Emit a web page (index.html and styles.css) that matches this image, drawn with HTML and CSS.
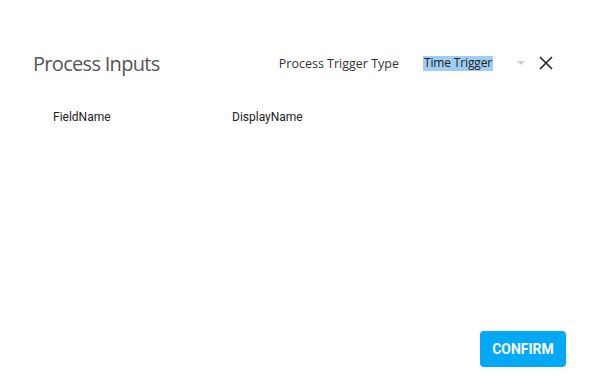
FILE: index.html
```html
<!DOCTYPE html>
<html>
	<head>
		<meta charset="UTF-8">
		<title>Process Inputs</title>
		<link rel="stylesheet" href="styles.css">
	</head>
	<body>
		<div class="dialog">
			<div class="dialog-head">
				<h2 class="title">Process Inputs</h2>
				<div class="trigger">
					<span class="trigger-label">Process Trigger Type</span>
					<div class="select">
						<span class="select-value">Time Trigger</span>
						<span class="select-arrow"></span>
					</div>
					<svg class="close" width="14" height="14" viewBox="0 0 14 14">
						<path d="M1 1L13 13M13 1L1 13" stroke="#222" stroke-width="1.6" fill="none"/>
					</svg>
				</div>
			</div>
			<div class="table-head">
				<div class="col col-field">FieldName</div>
				<div class="col">DisplayName</div>
			</div>
			<div class="table-body"></div>
			<div class="dialog-foot">
				<button class="confirm">CONFIRM</button>
			</div>
		</div>
	</body>
</html>
```

FILE: styles.css
```css
* {
	margin: 0;
	padding: 0;
	box-sizing: border-box;
}
body {
	background: #fff;
	font-family: Roboto, "Liberation Sans", sans-serif;
}
.dialog {
	width: 594px;
	height: 384px;
	display: flex;
	flex-direction: column;
	padding: 49px 28px 17px 33px;
}
.dialog-head {
	display: flex;
	align-items: center;
	justify-content: space-between;
	height: 28px;
}
.title {
	font-family: "Open Sans", sans-serif;
	font-weight: 400;
	font-size: 20px;
	color: #555;
	letter-spacing: -0.7px;
}
.trigger {
	display: flex;
	align-items: center;
	margin-right: 13px;
}
.trigger-label {
	font-family: "Open Sans", sans-serif;
	font-size: 12.5px;
	color: #333;
	margin-right: 24px;
}
.select {
	display: flex;
	align-items: center;
	width: 102px;
	margin-right: 14px;
}
.select-value {
	font-family: "Open Sans", sans-serif;
	font-size: 12px;
	color: #222;
	background: #a0cdf2;
	padding: 1px 1px 2px 1px;
	line-height: 12px;
	letter-spacing: -0.15px;
}
.select-arrow {
	margin-left: auto;
	width: 0;
	height: 0;
	border-left: 4px solid transparent;
	border-right: 4px solid transparent;
	border-top: 4px solid #ccc;
}
.close {
	display: block;
}
.table-head {
	display: flex;
	margin-top: 33px;
	padding-left: 20px;
	font-size: 12px;
	font-weight: 400;
	color: #222;
}
.col-field {
	width: 179px;
}
.table-body {
	flex: 1;
}
.dialog-foot {
	display: flex;
	justify-content: flex-end;
}
.confirm {
	width: 86px;
	height: 36px;
	border: none;
	border-radius: 4px;
	background: #03a9f4;
	color: #fff;
	font-family: Roboto, sans-serif;
	font-weight: 700;
	font-size: 14px;
}
```
